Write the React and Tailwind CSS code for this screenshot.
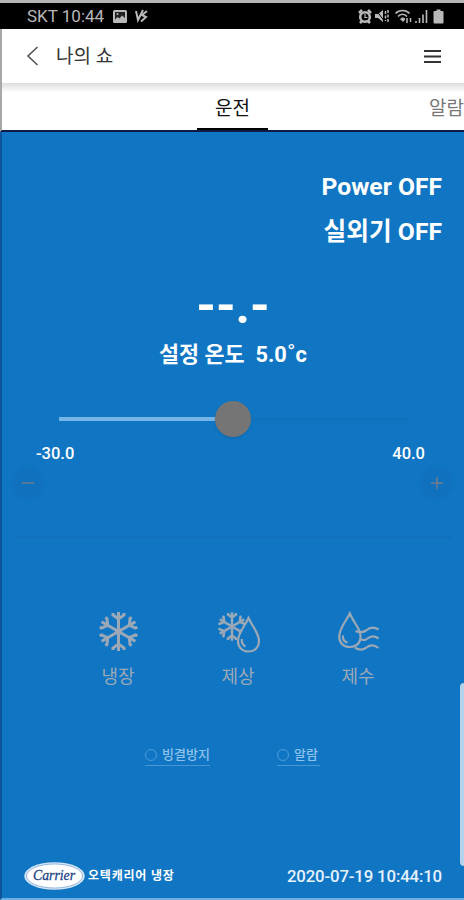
const MODES = [
  { label: '냉장', Icon: SnowflakeIcon },
  { label: '제상', Icon: DefrostIcon },
  { label: '제수', Icon: DrainIcon },
];

// one arm of the snowflake, turned around the centre six times
function Flake({ cx, cy, r, w }) {
  return (
    <g transform={`translate(${cx} ${cy}) scale(${r / 20})`} strokeWidth={w}>
      {[0, 60, 120, 180, 240, 300].map((a) => (
        <path key={a} transform={`rotate(${a})`} d="M0 0V-19.5M-5.500 -18.500V-16.500L0 -12.500L5.500 -16.500V-18.500" />
      ))}
    </g>
  );
}

function SnowflakeIcon() {
  return (
    <svg width="42" height="42" viewBox="0 0 42 42" fill="none" stroke="currentColor">
      <Flake cx={20.5} cy={20.5} r={20} w={3} />
      <circle cx="20.500" cy="20.500" r="3.500" fill="currentColor" stroke="none" />
    </svg>
  );
}

function DefrostIcon() {
  return (
    <svg width="42" height="42" viewBox="0 0 42 42" fill="none" stroke="currentColor" strokeWidth="2.200">
      <Flake cx={14} cy={15.5} r={14.5} w={3.4} />
      <path
        d="M30.500 7C27.500 14 20 22 20 30C20 36.500 24.500 40.500 30.500 40.500S41 36.500 41 30C41 22 33.500 14 30.500 7Z"
        className="fill-[#1076c4]"
      />
      <path d="M23.800 28C23.500 32 25 34.500 27.500 35.500" />
    </svg>
  );
}

function DrainIcon() {
  return (
    <svg width="42" height="42" viewBox="0 0 42 42" fill="none" stroke="currentColor" strokeWidth="2.200">
      <path d="M21.500 20C18.500 13.500 14 8 11.800 2.500C9.500 8 1.200 17 1.200 25.500C1.200 32 5.500 36 11.500 36C16.500 36 20.500 33.500 22 29.500C23 26.500 22.500 23 21.500 20Z" />
      <path d="M4.800 24.500C4.800 28.500 6.500 31 9.500 31.500" />
      <path d="M17.500 20C22 22 25 21.500 28 19.500C32 15.800 36 15.500 40.500 18.500" />
      <path d="M21.500 27.500C24.500 29.800 27 29.500 29.500 27.500C33 24.500 36.500 24.500 40.500 27.500" />
      <path d="M17 36.500C21 39.500 25 39 28.500 36.500C32 33.500 36 33.500 40.500 37" />
    </svg>
  );
}

function StatusBar() {
  return (
    <div className="flex h-[26px] items-center justify-between bg-black pr-[20px] pl-[27px] text-[#b9b9b9]">
      <div className="flex items-center">
        <span className="w-[77px] text-[17px] leading-none whitespace-nowrap">SKT 10:44</span>
        <svg className="ml-[9px]" width="14" height="13" viewBox="0 0 14 13">
          <rect width="14" height="13" rx="1.500" fill="currentColor" />
          <path d="M2 2H12V8L9 5.500L6.500 8.500L4.500 7L2 9.500Z" fill="#222" />
          <circle cx="4.500" cy="4" r="1" fill="currentColor" />
        </svg>
        <svg className="ml-[8px]" width="13" height="14" viewBox="0 0 13 14" fill="none" stroke="currentColor">
          <path d="M1 2L3 11L8 1" strokeWidth="2" />
          <path d="M12 2L7 6L11 8L6 12.500" strokeWidth="2" />
        </svg>
      </div>
      <div className="flex items-center">
        <svg width="14" height="15" viewBox="0 0 14 15">
          <circle cx="7" cy="8" r="4.800" fill="none" stroke="currentColor" strokeWidth="2.600" />
          <path d="M1 4L4 1M13 4L10 1M2 14L4 12M12 14L10 12" stroke="currentColor" strokeWidth="2.600" />
          <path d="M7 5V8.500H9.500" fill="none" stroke="currentColor" strokeWidth="1.200" />
        </svg>
        <svg className="ml-[3px]" width="14" height="14" viewBox="0 0 14 14" fill="none" stroke="currentColor">
          <path d="M0 5H3L8 1V13L3 9H0Z" fill="currentColor" stroke="none" />
          <path d="M1 1L10 13" stroke="#000" strokeWidth="1" />
          <path d="M10.500 2V12M13 1V13" strokeWidth="1.500" strokeDasharray="3 1.500" />
        </svg>
        <svg className="ml-[6px]" width="17" height="15" viewBox="0 0 17 15" fill="none" stroke="currentColor">
          <path d="M0.500 4.500C4 0.500 11 0.500 14.500 4.500" strokeWidth="1.600" />
          <path d="M3 7.500C5.500 4.500 9.500 4.500 12 7.500" strokeWidth="1.600" />
          <path d="M5.500 10C7 8.500 8.500 8.500 10 10L8 12.500Z" fill="currentColor" />
          <path d="M12 9V14M15.500 9V13" strokeWidth="1.500" />
        </svg>
        <svg className="ml-[3px]" width="14" height="14" viewBox="0 0 14 14" fill="none" stroke="currentColor" strokeWidth="1.600">
          <path d="M1 14V12M4.500 14V9M8 14V5.500" />
          <path d="M11.500 14V1" />
        </svg>
        <svg className="ml-[4px]" width="11" height="15" viewBox="0 0 11 15" fill="currentColor">
          <path d="M3.500 0.500H7.500V2H9.500Q10.500 2 10.500 3V13.500Q10.500 14.500 9.500 14.500H1.500Q0.500 14.500 0.500 13.500V3Q0.500 2 1.500 2H3.500Z" />
        </svg>
      </div>
    </div>
  );
}

function Header() {
  return (
    <header className="flex h-[54px] items-center border-l-2 border-[#a8a8a8] bg-white pr-[23px] pl-[24px]">
      <svg width="13" height="20" viewBox="0 0 13 20" fill="none" stroke="#555" strokeWidth="1.600">
        <path d="M11.500 1L2 10L11.500 19" />
      </svg>
      <h1 className="ml-[17px] flex-1 pt-[2px] text-[19px] leading-[24px] text-[#333]">나의 쇼</h1>
      <svg width="17" height="15" viewBox="0 0 17 15" stroke="#333" strokeWidth="2">
        <path d="M0 2H17M0 7.500H17M0 13H17" />
      </svg>
    </header>
  );
}

function Tabs() {
  return (
    <nav className="flex h-[49px] overflow-hidden border-b-2 border-l-2 border-b-[#0b1c48] border-l-[#a8a8a8] bg-linear-to-b from-[#dcdcdc] via-white via-20% to-white text-[19px] leading-[24px]">
      <div className="w-[195px] shrink-0" />
      <div className="flex h-[47px] w-[71px] shrink-0 items-center justify-center border-b-2 border-black pt-[7px] text-[#111]">
        운전
      </div>
      <div className="flex h-[47px] w-[196px] shrink-0 items-center pt-[5px] pl-[161px] whitespace-nowrap text-[#777]">
        알람
      </div>
    </nav>
  );
}

function TemperatureSlider() {
  return (
    <div className="flex h-[36px] items-center pr-[55px] pl-[57px]">
      <div className="h-[4px] w-[156px] bg-[#76b5e7]" />
      <div className="size-[36px] shrink-0 rounded-full bg-[#757575] shadow-sm" />
      <div className="h-[3px] flex-1 bg-[#0f70bc]" />
    </div>
  );
}

function StepButton({ children }) {
  return (
    <button
      type="button"
      className="flex size-[30px] items-center justify-center rounded-full bg-[#1071be] text-[#6f7c8c] shadow-[0_0_4px_#1071be]"
    >
      <svg width="12" height="12" viewBox="0 0 12 12" fill="none" stroke="currentColor" strokeWidth="1.500">
        {children}
      </svg>
    </button>
  );
}

function Check({ label, className }) {
  return (
    <label className={`flex h-[22px] items-center border-b border-[#4796d6] text-[#8fc2ea] ${className}`}>
      <span className="size-[12px] shrink-0 rounded-full border border-[#4c9bda]" />
      <span className="ml-[5px] text-[13px] leading-[20px] font-medium whitespace-nowrap">{label}</span>
    </label>
  );
}

function CarrierLogo() {
  return (
    <svg width="61" height="28" viewBox="0 0 61 28">
      <ellipse cx="30.500" cy="14" rx="30.300" ry="13.800" fill="#d5e7f6" />
      <ellipse cx="30.500" cy="14" rx="28" ry="12" fill="#fff" stroke="#7fa8d6" strokeWidth="0.800" />
      <text
        x="30"
        y="18"
        textAnchor="middle"
        textLength="42"
        lengthAdjust="spacingAndGlyphs"
        fill="#1d4288"
        stroke="#1d4288"
        strokeWidth="0.300"
        className="font-['Liberation_Serif',serif] text-[15px] italic"
      >
        Carrier
      </text>
    </svg>
  );
}

export default function App() {
  return (
    <div className="relative flex h-[900px] w-[464px] flex-col overflow-hidden bg-[#1076c4] font-[Roboto,'Noto_Sans_CJK_KR',sans-serif]">
      <div className="h-[3px] bg-[#b5b5b5]" />
      <StatusBar />
      <Header />
      <Tabs />

      <main className="flex h-[768px] flex-col border-b-2 border-l-2 border-b-[#6eaee0] border-l-[#0d549c] text-white">
        <div className="mt-[33px] pr-[22px] text-right text-[24.700px] font-bold">
          <p className="h-[44px] leading-[44px]">Power OFF</p>
          <p className="h-[44px] leading-[46px]">실외기 OFF</p>
        </div>

        <p className="mt-[28px] h-[50px] text-center text-[50px] leading-[50px] font-bold">--.-</p>
        <p className="mt-[10px] flex h-[28px] justify-center text-[21.800px] leading-[28px] font-bold whitespace-pre">
          설정 온도{'  '}5.0<span className="text-[26px] font-normal">˚</span>c
        </p>

        <div className="mt-[32px]">
          <TemperatureSlider />
        </div>
        <div className="mt-[6px] flex h-[22px] justify-between pr-[39px] pl-[34px] text-[16.500px] leading-[22px] font-medium">
          <span>-30.0</span>
          <span>40.0</span>
        </div>
        <div className="mt-[3px] flex justify-between pr-[12px] pl-[11px]">
          <StepButton>
            <path d="M0 6H12" />
          </StepButton>
          <StepButton>
            <path d="M0 6H12M6 0V12" />
          </StepButton>
        </div>
        <hr className="mt-[38px] mr-[12px] ml-[12px] border-t-2 border-[#1070bb]" />

        <div className="mt-[73px] flex pl-[57px] text-[#9ba8b6]">
          {MODES.map(({ label, Icon }) => (
            <div key={label} className="flex w-[120px] flex-col items-center">
              <Icon />
              <span className="mt-[12px] mr-[2px] h-[24px] text-[18px] leading-[24px]">{label}</span>
            </div>
          ))}
        </div>

        <div className="mt-[55px] flex pl-[143px]">
          <Check label="빙결방지" className="w-[65px]" />
          <Check label="알람" className="ml-[67px] w-[43px]" />
        </div>

        <footer className="mt-[96px] flex h-[28px] items-center pr-[22px] pl-[22px]">
          <CarrierLogo />
          <span className="ml-[3px] text-[12px] leading-[20px] font-bold tracking-[0.8px]">오텍캐리어 냉장</span>
          <span className="ml-auto text-[16.800px] leading-[28px] font-medium tracking-[-0.15px] text-[#e6f2fc]">
            2020-07-19 10:44:10
          </span>
        </footer>
      </main>

      {/* edge panel handle */}
      <div className="absolute top-[683px] right-0 h-[183px] w-[4px] rounded-l-[4px] bg-[#b3d3ec]" />
    </div>
  );
}
